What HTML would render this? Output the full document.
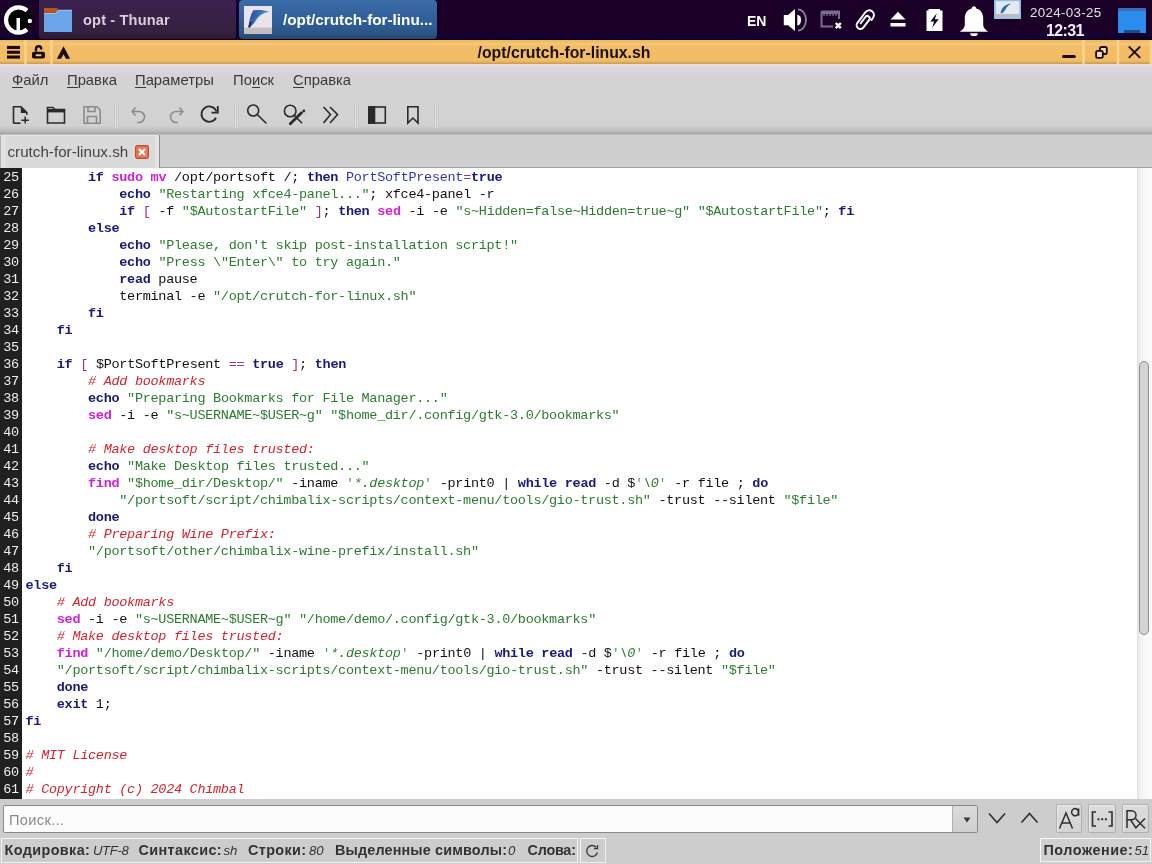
<!DOCTYPE html>
<html><head><meta charset="utf-8">
<style>
*{margin:0;padding:0;box-sizing:border-box}
html,body{width:1152px;height:864px;overflow:hidden;background:#cfcfcf;font-family:"Liberation Sans",sans-serif}
body{will-change:transform}
.abs{position:absolute}
svg{position:absolute;overflow:visible}
#taskbar{left:0;top:0;width:1152px;height:40px;background:linear-gradient(#1a0026 0px,#1a0026 33px,#12003a 35px,#10002c 38px,#0c0010 40px)}
#titlebar{left:0;top:40px;width:1152px;height:24px;background:linear-gradient(#f0b860 0px,#f2bd66 2px,#f6c684 4px,#f2bd66 6px,#f1bc64 21px,#c49a52 24px)}
#menubar{left:0;top:64px;width:1152px;height:31px;background:linear-gradient(#e4e0da 0px,#dcd8e0 3px,#d6d3da 10px,#d3d3d3 18px,#d3d3d3)}
#toolbar{left:0;top:95px;width:1152px;height:40px;background:linear-gradient(#d3d3d3 0px,#d2d2d2 30px,#c8c8c8 33px,#bcbcbc 36px,#a8a8a8 38.5px,#c4c4c4 40px)}
#tabbar{left:0;top:135px;width:1152px;height:33px;background:#cdcdcd}
#editor{left:0;top:168px;width:1152px;height:631px;background:#fff;overflow:hidden}
#gutter{left:0;top:0;width:22px;height:631px;background:#202020}
#searchbar{left:0;top:799px;width:1152px;height:39px;background:#cdcdcd}
#statusbar{left:0;top:838px;width:1152px;height:26px;background:#cdcdcd}
.code{font-family:"Liberation Mono",monospace;font-size:13.5px;letter-spacing:-0.2875px;line-height:17px;white-space:pre}
.ln{position:absolute;left:0;width:18.8px;text-align:right;color:#eeeeee}
.cl{position:absolute;left:25.5px;color:#111}
.k{color:#1a1a78;font-weight:bold}
.m{color:#d020d0;font-weight:bold}
.s{color:#2c7c30}
.q{color:#58a058}
.c{color:#d42430;font-style:italic}
.v{color:#3434b8}
.p{color:#963684}
.si{color:#2c7c30;font-style:italic}
.tb{font-size:14.8px;color:#3a3a3a;position:absolute;top:72px;white-space:nowrap}
.tb u{text-decoration:none;position:relative}.tb u::after{content:"";position:absolute;left:0;right:0;bottom:0px;height:1px;background:#3a3a3a}
.sep{position:absolute;top:104px;width:6px;height:24px;background:linear-gradient(90deg,#c6c6c6 0,#c6c6c6 1px,#e2e2e2 1px,#e2e2e2 2px,#c4c4c4 2px,#c4c4c4 3px,#e0e0e0 3px,#e0e0e0 4px,#c8c8c8 4px,#c8c8c8 5px,transparent 5px)}
.st{position:absolute;top:841.5px;font-size:14.4px;color:#333;white-space:nowrap}
.st b{font-weight:bold}
.st i{font-style:italic;font-size:13.2px}
</style></head><body>
<!-- TASKBAR -->
<div id="taskbar" class="abs">
  <!-- logo -->
  <svg style="left:0;top:0" width="40" height="39" viewBox="0 0 40 39">
    <circle cx="19.5" cy="20" r="12.5" fill="#000"/>
    <path d="M27 10.6 A12.6 12.6 0 1 0 27 29.4" fill="none" stroke="#fff" stroke-width="4.2"/>
    <rect x="16.5" y="18" width="3.5" height="13.5" fill="#fff"/>
    <circle cx="29.8" cy="21" r="2.2" fill="#fff"/>
  </svg>
  <div class="abs" style="left:39px;top:0;width:197px;height:39px;border-radius:0 0 3px 3px;background:linear-gradient(#3c2150,#34203f 80%,#2a1a36)"></div>
  <svg style="left:44px;top:8px" width="28" height="24" viewBox="0 0 28 24">
    <path d="M0 0 H12.5 Q14.5 0 14 1.8 L12.5 4.8 H0 Z" fill="#b8561c"/>
    <path d="M0 5.4 H11.8 L14.2 2.3 H28 V24 H0 Z" fill="#6ca6e8"/>
    <path d="M0 5.4 H11.8 L14.2 2.3 H28" fill="none" stroke="#a8ccf4" stroke-width="1"/>
  </svg>
  <div class="abs" style="left:83px;top:12.2px;font-size:14.6px;letter-spacing:0.15px;font-weight:bold;color:#d8cdda;white-space:nowrap">opt - Thunar</div>
  <div class="abs" style="left:239px;top:0;width:198px;height:39px;border-radius:4px;background:linear-gradient(#3a6ca8,#2f5d95 60%,#2b5586 85%,#26446e)"></div>
  <svg style="left:244px;top:6px" width="28" height="28" viewBox="0 0 28 28">
    <rect x="0" y="0" width="28" height="28" fill="#e8e4ea"/>
    <rect x="0" y="21.7" width="28" height="6.3" fill="#c2bec2"/>
    <defs><linearGradient id="fg" x1="0" y1="0" x2="1" y2="0.3"><stop offset="0" stop-color="#2a4c94"/><stop offset="0.6" stop-color="#3f6cb8"/><stop offset="1" stop-color="#6a8cc8"/></linearGradient></defs>
    <path d="M9 4.5 C14 3.5 20 4 24.5 5.5 C18 7 13.5 10.5 10.5 16.5 L6 21.5 L4.5 21 C5 15 6.5 9 9 4.5 Z" fill="url(#fg)"/>
    <path d="M10.5 16.5 C13.5 10.5 18 7 24.5 5.5" fill="none" stroke="#5ab0b8" stroke-width="0.8"/>
    <path d="M4.8 21.5 L7 16" stroke="#1a2440" stroke-width="1.6"/>
  </svg>
  <div class="abs" style="left:283px;top:11px;font-size:15.3px;font-weight:bold;color:#fff;white-space:nowrap">/opt/crutch-for-linu...</div>

  <div class="abs" style="left:747px;top:12.5px;font-size:14px;font-weight:bold;color:#fff">EN</div>
  <!-- speaker -->
  <svg style="left:778px;top:4px" width="32" height="30" viewBox="0 0 32 30">
    <path d="M5.8 11 H10 L17 4.9 V27 L10 21.3 H5.8 Z" fill="#fff"/>
    <path d="M19.3 10.7 A3.8 5.4 0 0 1 19.3 21.5 Z" fill="#fff"/>
    <path d="M20 5.4 A8 10.6 0 0 1 20 26.6" fill="none" stroke="#8c7c94" stroke-width="1.9"/>
  </svg>
  <!-- network -->
  <svg style="left:818px;top:8px" width="26" height="24" viewBox="0 0 26 24">
    <path d="M3.5 3.5 H21 V11 M3.5 3.5 V18.4 H15" fill="none" stroke="#7c6c8c" stroke-width="2"/>
    <path d="M3 4.8 H21.5" stroke="#7c6c8c" stroke-width="2.6"/>
    <path d="M6 6 V8 M9 6 V8 M12 6 V8 M15 6 V8 M18 6 V8" stroke="#7c6c8c" stroke-width="1.3"/>
    <path d="M17.8 15 L22.8 20.2 M22.8 15 L17.8 20.2" stroke="#fff" stroke-width="2.4"/>
  </svg>
  <!-- paperclip -->
  <svg style="left:850px;top:4px" width="32" height="32" viewBox="0 0 32 32">
    <g transform="translate(15.2 16.4) rotate(37) scale(0.95) translate(-5 -12)">
      <path d="M10 8.5 V5 A5 5 0 0 0 0 5 V19 A4 4 0 0 0 8 19 V9 A2.5 2.5 0 0 0 3 9 V18" fill="none" stroke="#fff" stroke-width="2.1"/>
    </g>
  </svg>
  <!-- eject -->
  <svg style="left:890px;top:11px" width="16" height="16" viewBox="0 0 16 16">
    <path d="M8 0.8 L15.5 8.5 H0.5 Z" fill="#fff"/>
    <rect x="0.5" y="12" width="15" height="3.5" fill="#fff"/>
  </svg>
  <!-- battery -->
  <svg style="left:925.5px;top:9px" width="17" height="23" viewBox="0 0 17 23">
    <path d="M2.5 0 H14 V1.6 H16.5 V22 H0.5 V1.6 H2.5 Z" fill="#fff"/>
    <path d="M10.8 4.2 L4.3 12.4 H8.1 L6.2 18.8 L12.7 10.2 H8.9 Z" fill="#1a0026"/>
  </svg>
  <!-- bell -->
  <svg style="left:959px;top:6px" width="30" height="30" viewBox="0 0 30 30">
    <path d="M15 0.3 C16.4 0.3 17.2 1.2 17.2 2.6 C21.8 3.8 24.2 7.5 24.2 12.5 V19 C24.2 21.6 26.2 23.6 29.3 25.8 H0.7 C3.8 23.6 5.8 21.6 5.8 19 V12.5 C5.8 7.5 8.2 3.8 12.8 2.6 C12.8 1.2 13.6 0.3 15 0.3 Z" fill="#fff"/>
    <path d="M11.2 27.2 A3.8 2.9 0 0 0 18.8 27.2 Z" fill="#fff"/>
  </svg>
  <!-- thumbnail -->
  <svg style="left:993.5px;top:0px" width="27" height="19" viewBox="0 0 27 19">
    <rect x="0" y="0" width="27" height="19" fill="#8ec0e6"/>
    <rect x="1.8" y="1.2" width="23.4" height="16" fill="#e4e8f0"/>
    <rect x="1.8" y="14" width="23.4" height="3.2" fill="#b8bcc4"/>
    <path d="M6.5 13 C7.5 8 10.5 4.5 17 3.5 C13.5 6 12 8 10.5 11 L8 13.5 Z" fill="#2c6aa0"/>
  </svg>
  <div class="abs" style="left:1030px;top:4.5px;font-size:13.4px;color:#e6dcec;white-space:nowrap;letter-spacing:0.3px">2024-03-25</div>
  <div class="abs" style="left:1046px;top:22px;font-size:16px;letter-spacing:-0.6px;font-weight:bold;color:#f4eef6;white-space:nowrap">12:31</div>
  <!-- desktop icon -->
  <svg style="left:1118px;top:8px" width="28" height="25" viewBox="0 0 28 25">
    <rect x="0" y="0" width="28" height="25" fill="#2c8ceb"/>
    <rect x="0" y="0" width="28" height="3" fill="#3a6eb0"/>
    <rect x="6" y="22" width="16" height="3" fill="#1e4e86"/>
  </svg>
</div>

<!-- TITLE BAR -->
<div id="titlebar" class="abs">
  <svg style="left:0;top:-1px" width="80" height="26" viewBox="0 0 80 26">
    <rect x="7" y="6.9" width="13" height="3.1" fill="#1a0a0a"/>
    <rect x="7" y="11.7" width="13" height="3.1" fill="#1a0a0a"/>
    <rect x="7" y="16.5" width="13" height="3.1" fill="#1a0a0a"/>
    <path d="M25.5 1 V25 M51.5 1 V25" stroke="#f8d48e" stroke-width="2.5"/>
    <path d="M36 12.5 V9.8 A2.6 2.6 0 0 1 41.2 9.8 V10.5" fill="none" stroke="#1a0a0a" stroke-width="2.4"/>
    <rect x="32" y="12.8" width="13" height="6.8" rx="2" fill="#1a0a0a"/>
    <rect x="35.5" y="15.2" width="6" height="2" rx="1" fill="#e8c890"/>
    <path d="M56.9 19.8 L63.5 7.2 L70.1 19.8 L66 19.8 L63.5 15.2 L61 19.8 Z" fill="#1a0a0a"/>
  </svg>
  <div class="abs" style="left:77px;width:974px;top:4px;text-align:center;font-size:15.8px;font-weight:bold;color:#1a1010">/opt/crutch-for-linux.sh</div>
  <svg style="left:1050px;top:-1px" width="102" height="26" viewBox="0 0 102 26">
    <path d="M33.5 1 V25 M68 1 V25 M101 1 V25" stroke="#f8d48e" stroke-width="2.5"/>
    <rect x="12" y="16.1" width="13.8" height="3" rx="1.5" fill="#1a0a0a"/>
    <rect x="49.9" y="8" width="6.9" height="7" rx="1.6" fill="#f0dcb4" stroke="#1a0a0a" stroke-width="1.8"/>
    <rect x="46.1" y="11.9" width="6.7" height="6.9" rx="1.6" fill="#f0dcb4" stroke="#1a0a0a" stroke-width="1.8"/>
    <path d="M78.8 7.5 L90.2 18.8 M90.2 7.5 L78.8 18.8" stroke="#1a0a0a" stroke-width="1.8"/>
  </svg>
</div>

<!-- MENU BAR -->
<div id="menubar" class="abs"></div>
<div class="tb" style="left:12px"><u>Ф</u>айл</div>
<div class="tb" style="left:67px"><u>П</u>равка</div>
<div class="tb" style="left:135px"><u>П</u>араметры</div>
<div class="tb" style="left:233px">По<u>и</u>ск</div>
<div class="tb" style="left:293px"><u>С</u>правка</div>

<!-- TOOLBAR -->
<div id="toolbar" class="abs"></div>
<svg style="left:0;top:95px" width="460" height="40" viewBox="0 0 460 40">
  <g fill="none" stroke="#2a2a2a" stroke-width="1.6">
    <!-- new -->
    <path d="M13.5 28.2 V11.8 H21 L26.8 17.6 V19.8"/>
    <path d="M13.5 28.2 H20.5"/>
  </g>
  <path d="M20.8 11.2 L27.5 17.9 H20.8 Z" fill="#2a2a2a"/>
  <path d="M25.2 21.5 V28.5 M21.3 25.2 H28.8" stroke="#2a2a2a" stroke-width="1.5"/>
  <!-- open -->
  <path d="M47.5 28 V12.5 H53 L55 14.5 H64.5 V28 Z" fill="none" stroke="#2a2a2a" stroke-width="1.6"/>
  <rect x="47" y="14" width="18" height="3.4" fill="#2a2a2a"/>
  <!-- save disabled -->
  <path d="M84 11.8 H97 L100.2 15 V28.2 H84 Z" fill="none" stroke="#8c8c8c" stroke-width="1.6"/>
  <path d="M88 12 V16.5 H95 V12" fill="none" stroke="#8c8c8c" stroke-width="1.6"/>
  <path d="M87.5 28 V21.5 H96.5 V28" fill="none" stroke="#8c8c8c" stroke-width="1.6"/>
  <!-- sep -->
  <!-- undo -->
  <path d="M135.5 12.5 L132.2 16.5 L135.5 20.5" fill="none" stroke="#8c8c8c" stroke-width="1.6"/>
  <path d="M132.5 16.5 H139 A5.5 5.5 0 0 1 139 27.5 H137" fill="none" stroke="#8c8c8c" stroke-width="1.6"/>
  <!-- redo -->
  <path d="M179.5 12.5 L182.8 16.5 L179.5 20.5" fill="none" stroke="#8c8c8c" stroke-width="1.6"/>
  <path d="M182.5 16.5 H176 A5.5 5.5 0 0 0 176 27.5 H178" fill="none" stroke="#8c8c8c" stroke-width="1.6"/>
  <!-- reload -->
  <path d="M216 22.8 A7.7 7.7 0 1 1 216.5 16.5" fill="none" stroke="#2a2a2a" stroke-width="1.8"/>
  <path d="M217.8 11 V17.6 H211.5" fill="none" stroke="#2a2a2a" stroke-width="1.8"/>
  <!-- search -->
  <circle cx="253.2" cy="15.5" r="5.5" fill="none" stroke="#2a2a2a" stroke-width="1.6"/>
  <path d="M257.2 19.5 L266.5 28.5" stroke="#2a2a2a" stroke-width="1.6"/>
  <!-- search replace -->
  <circle cx="290.2" cy="16" r="5.8" fill="none" stroke="#2a2a2a" stroke-width="1.6"/>
  <path d="M294.2 20.3 L302 28.2" stroke="#2a2a2a" stroke-width="1.6"/>
  <path d="M290.3 28.8 L301.5 17.8" stroke="#2a2a2a" stroke-width="2.8" stroke-linecap="round"/>
  <circle cx="303.8" cy="16" r="1.4" fill="#2a2a2a"/>
  <!-- double chevron -->
  <path d="M323.5 12 L330.5 19.5 L323.5 28 M330 12 L337.5 19.5 L330 28" fill="none" stroke="#2a2a2a" stroke-width="1.6"/>
  <!-- side pane -->
  <rect x="368.8" y="12" width="16.5" height="16" fill="none" stroke="#2a2a2a" stroke-width="1.6"/>
  <rect x="368" y="11.2" width="7.3" height="17.6" fill="#2a2a2a"/>
  <!-- bookmark -->
  <path d="M407.8 11.8 H418 V28 L412.9 23 L407.8 28 Z" fill="none" stroke="#2a2a2a" stroke-width="1.6"/>
</svg>
<div class="sep" style="left:113.5px"></div>
<div class="sep" style="left:233.5px"></div>
<div class="sep" style="left:353.5px"></div>
<div class="sep" style="left:433.5px"></div>

<!-- TAB BAR -->
<div id="tabbar" class="abs"></div>
<div class="abs" style="left:159px;top:135px;width:993px;height:33px;background:#cfcfcf;border-left:1px solid #8e8e8e;border-bottom:1px solid #a0a0a0"></div>
<div class="abs" style="left:0;top:135px;width:159px;height:33px;background:#dadada;border-left:1px solid #b0b0b0;border-top:1px solid #e6e6e6;box-shadow:inset 5px 0 0 #e2e2e2, inset -4px 0 0 #e4e4e4"></div>
<div class="abs" style="left:7.5px;top:142.5px;font-size:15.2px;color:#444;white-space:nowrap">crutch-for-linux.sh</div>
<svg style="left:135px;top:145px" width="14" height="14" viewBox="0 0 14 14">
  <rect x="0.6" y="0.6" width="12.8" height="12.8" rx="1.8" fill="#e67a5a" stroke="#c4482c" stroke-width="1.2"/>
  <path d="M4 4 L10 10 M10 4 L4 10" stroke="#fff" stroke-width="2.2"/>
</svg>

<!-- EDITOR -->
<div id="editor" class="abs">
  <div id="gutter" class="abs"></div>
  <div id="code" class="abs code" style="left:0;top:0;width:1137px;height:631px"><div class="ln" style="top:1px">25</div>
<div class="cl" style="top:1px">        <span class="k">if</span> <span class="m">sudo</span> <span class="m">mv</span> /opt/portsoft /; <span class="k">then</span> <span class="v">PortSoftPresent</span><span class="p">=</span><span class="k">true</span></div>
<div class="ln" style="top:18px">26</div>
<div class="cl" style="top:18px">            <span class="k">echo</span> <span class="s">"Restarting xfce4-panel..."</span>; xfce4-panel -r</div>
<div class="ln" style="top:35px">27</div>
<div class="cl" style="top:35px">            <span class="k">if</span> <span class="p">[</span> -f <span class="s">"$AutostartFile"</span> <span class="p">]</span>; <span class="k">then</span> <span class="m">sed</span> -i -e <span class="s">"s~Hidden=false~Hidden=true~g"</span> <span class="s">"$AutostartFile"</span>; <span class="k">fi</span></div>
<div class="ln" style="top:52px">28</div>
<div class="cl" style="top:52px">        <span class="k">else</span></div>
<div class="ln" style="top:69px">29</div>
<div class="cl" style="top:69px">            <span class="k">echo</span> <span class="s">"Please, don't skip post-installation script!"</span></div>
<div class="ln" style="top:86px">30</div>
<div class="cl" style="top:86px">            <span class="k">echo</span> <span class="s">"Press \"Enter\" to try again."</span></div>
<div class="ln" style="top:103px">31</div>
<div class="cl" style="top:103px">            <span class="k">read</span> pause</div>
<div class="ln" style="top:120px">32</div>
<div class="cl" style="top:120px">            terminal -e <span class="s">"/opt/crutch-for-linux.sh"</span></div>
<div class="ln" style="top:137px">33</div>
<div class="cl" style="top:137px">        <span class="k">fi</span></div>
<div class="ln" style="top:154px">34</div>
<div class="cl" style="top:154px">    <span class="k">fi</span></div>
<div class="ln" style="top:171px">35</div>
<div class="ln" style="top:188px">36</div>
<div class="cl" style="top:188px">    <span class="k">if</span> <span class="p">[</span> $PortSoftPresent <span class="p">==</span> <span class="k">true</span> <span class="p">]</span>; <span class="k">then</span></div>
<div class="ln" style="top:205px">37</div>
<div class="cl" style="top:205px">        <span class="c"># Add bookmarks</span></div>
<div class="ln" style="top:222px">38</div>
<div class="cl" style="top:222px">        <span class="k">echo</span> <span class="s">"Preparing Bookmarks for File Manager..."</span></div>
<div class="ln" style="top:239px">39</div>
<div class="cl" style="top:239px">        <span class="m">sed</span> -i -e <span class="s">"s~USERNAME~$USER~g"</span> <span class="s">"$home_dir/.config/gtk-3.0/bookmarks"</span></div>
<div class="ln" style="top:256px">40</div>
<div class="ln" style="top:273px">41</div>
<div class="cl" style="top:273px">        <span class="c"># Make desktop files trusted:</span></div>
<div class="ln" style="top:290px">42</div>
<div class="cl" style="top:290px">        <span class="k">echo</span> <span class="s">"Make Desktop files trusted..."</span></div>
<div class="ln" style="top:307px">43</div>
<div class="cl" style="top:307px">        <span class="m">find</span> <span class="s">"$home_dir/Desktop/"</span> -iname <span class="q">'</span><span class="si">*.desktop</span><span class="q">'</span> -print0 | <span class="k">while</span> <span class="k">read</span> -d $<span class="q">'</span><span class="si">\0</span><span class="q">'</span> -r file ; <span class="k">do</span></div>
<div class="ln" style="top:324px">44</div>
<div class="cl" style="top:324px">            <span class="s">"/portsoft/script/chimbalix-scripts/context-menu/tools/gio-trust.sh"</span> -trust --silent <span class="s">"$file"</span></div>
<div class="ln" style="top:341px">45</div>
<div class="cl" style="top:341px">        <span class="k">done</span></div>
<div class="ln" style="top:358px">46</div>
<div class="cl" style="top:358px">        <span class="c"># Preparing Wine Prefix:</span></div>
<div class="ln" style="top:375px">47</div>
<div class="cl" style="top:375px">        <span class="s">"/portsoft/other/chimbalix-wine-prefix/install.sh"</span></div>
<div class="ln" style="top:392px">48</div>
<div class="cl" style="top:392px">    <span class="k">fi</span></div>
<div class="ln" style="top:409px">49</div>
<div class="cl" style="top:409px"><span class="k">else</span></div>
<div class="ln" style="top:426px">50</div>
<div class="cl" style="top:426px">    <span class="c"># Add bookmarks</span></div>
<div class="ln" style="top:443px">51</div>
<div class="cl" style="top:443px">    <span class="m">sed</span> -i -e <span class="s">"s~USERNAME~$USER~g"</span> <span class="s">"/home/demo/.config/gtk-3.0/bookmarks"</span></div>
<div class="ln" style="top:460px">52</div>
<div class="cl" style="top:460px">    <span class="c"># Make desktop files trusted:</span></div>
<div class="ln" style="top:477px">53</div>
<div class="cl" style="top:477px">    <span class="m">find</span> <span class="s">"/home/demo/Desktop/"</span> -iname <span class="q">'</span><span class="si">*.desktop</span><span class="q">'</span> -print0 | <span class="k">while</span> <span class="k">read</span> -d $<span class="q">'</span><span class="si">\0</span><span class="q">'</span> -r file ; <span class="k">do</span></div>
<div class="ln" style="top:494px">54</div>
<div class="cl" style="top:494px">    <span class="s">"/portsoft/script/chimbalix-scripts/context-menu/tools/gio-trust.sh"</span> -trust --silent <span class="s">"$file"</span></div>
<div class="ln" style="top:511px">55</div>
<div class="cl" style="top:511px">    <span class="k">done</span></div>
<div class="ln" style="top:528px">56</div>
<div class="cl" style="top:528px">    <span class="k">exit</span> 1;</div>
<div class="ln" style="top:545px">57</div>
<div class="cl" style="top:545px"><span class="k">fi</span></div>
<div class="ln" style="top:562px">58</div>
<div class="ln" style="top:579px">59</div>
<div class="cl" style="top:579px"><span class="c"># MIT License</span></div>
<div class="ln" style="top:596px">60</div>
<div class="cl" style="top:596px"><span class="c">#</span></div>
<div class="ln" style="top:613px">61</div>
<div class="cl" style="top:613px"><span class="c"># Copyright (c) 2024 Chimbal</span></div>
<div class="ln" style="top:630px">62</div>
<div class="cl" style="top:630px"><span class="c">#</span></div></div>
  <!-- scrollbar -->
  <div class="abs" style="left:1137px;top:0;width:15px;height:631px;background:linear-gradient(90deg,#dedede,#f2f2f2 20%,#f7f7f7 50%,#fafafa)"></div>
  <div class="abs" style="left:1139px;top:193px;width:10px;height:274px;border-radius:5px;background:#d4d4d4;border:1px solid #8e8e8e"></div>
</div>

<!-- SEARCH BAR -->
<div id="searchbar" class="abs"></div>
<div class="abs" style="left:3px;top:805px;width:975px;height:28px;background:#fcfcfc;border:1px solid #8a8a8a;border-radius:2px"></div>
<div class="abs" style="left:952px;top:806px;width:25px;height:26px;background:linear-gradient(#dcdcdc,#cfcfcf);border-left:1px solid #b0b0b0"></div>
<svg style="left:963px;top:817px" width="8" height="6" viewBox="0 0 8 6"><path d="M0.5 0.5 H7.5 L4 5.5 Z" fill="#3a3a3a"/></svg>
<div class="abs" style="left:9px;top:811.5px;font-size:14.6px;letter-spacing:0.35px;color:#8a8a8a;white-space:nowrap">Поиск...</div>
<svg style="left:985px;top:808px" width="60" height="20" viewBox="0 0 60 20">
  <path d="M4 5.5 L12 14.5 L20 5.5" fill="none" stroke="#2e2e2e" stroke-width="1.6"/>
  <path d="M36.5 14.5 L44.5 5.5 L52.5 14.5" fill="none" stroke="#2e2e2e" stroke-width="1.6"/>
</svg>
<div class="abs" style="left:1056px;top:804px;width:26px;height:29px;background:linear-gradient(#dcdcdc,#d4d4d4);border:1px solid #b0b0b0;box-shadow:inset 1px 1px 0 #ececec;border-radius:2px"></div>
<div class="abs" style="left:1088px;top:804px;width:28px;height:29px;background:linear-gradient(#dcdcdc,#d4d4d4);border:1px solid #b0b0b0;box-shadow:inset 1px 1px 0 #ececec;border-radius:2px"></div>
<div class="abs" style="left:1122px;top:804px;width:27px;height:29px;background:linear-gradient(#dcdcdc,#d4d4d4);border:1px solid #b0b0b0;box-shadow:inset 1px 1px 0 #ececec;border-radius:2px"></div>
<svg style="left:1050px;top:800px" width="102" height="38" viewBox="0 0 102 38">
  <g fill="none" stroke="#2e2e2e" stroke-width="1.5">
  <path d="M9.5 28.5 L16 13 L22.5 28.5 M12 23 H20"/>
  <path d="M28.6 8.5 V15.8 M28.4 12.2 A3.4 3.6 0 1 1 28.4 12.1"/>
  <path d="M46 12 H42.5 V26 H46 M58.5 12 H62 V26 H58.5" stroke-width="1.6"/>
  <path d="M77 28 V10.8 H81.5 A4.5 4.5 0 0 1 81.5 19.8 H77 M80.5 19.8 L86 28"/>
  <path d="M85.5 18.5 L95 28.2 M95 18.5 L85.5 28.2"/>
  </g>
  <path d="M47.5 18.2 h2 v2 h-2z M51.2 18.2 h2 v2 h-2z M54.9 18.2 h2 v2 h-2z" fill="#2e2e2e"/>
</svg>

<!-- STATUS BAR -->
<div id="statusbar" class="abs"></div>
<div class="abs" style="left:1px;top:838px;width:577px;height:25px;border:1px solid #f6f6f6;border-right-color:#f0f0f0;border-bottom-color:#f2f2f2"></div>
<div class="abs" style="left:580px;top:838px;width:26px;height:25px;border:1px solid #f6f6f6;border-right-color:#f0f0f0;border-bottom-color:#f2f2f2"></div>
<svg style="left:585px;top:844px" width="16" height="13" viewBox="0 0 16 13">
  <path d="M12.5 8.5 A5.5 5.5 0 1 1 11 3" fill="none" stroke="#3a3a3a" stroke-width="1.3"/>
  <path d="M12.5 1 V4.5 H9" fill="none" stroke="#3a3a3a" stroke-width="1.3"/>
</svg>
<div class="st" style="left:4.5px"><b style="letter-spacing:0.4px">Кодировка:</b></div><div class="st" style="left:93px"><i style="letter-spacing:-0.4px">UTF-8</i></div>
<div class="st" style="left:138.5px"><b style="letter-spacing:0.38px">Синтаксис:</b></div><div class="st" style="left:223.5px"><i>sh</i></div>
<div class="st" style="left:248px"><b style="letter-spacing:0.36px">Строки:</b></div><div class="st" style="left:309px"><i>80</i></div>
<div class="st" style="left:335px"><b style="letter-spacing:0.15px">Выделенные символы:</b></div><div class="st" style="left:508px"><i>0</i></div>
<div class="st" style="left:527.5px"><b style="letter-spacing:-0.23px">Слова:</b></div>
<div class="abs" style="left:1040px;top:838px;width:111px;height:24px;border:1px solid #f8f8f8;border-bottom-color:#f2f2f2;background:#d0d0d0"></div>
<div class="st" style="left:1043.5px"><b style="letter-spacing:0.52px">Положение:</b></div><div class="st" style="left:1134.5px"><i>51</i></div>
</body></html>
